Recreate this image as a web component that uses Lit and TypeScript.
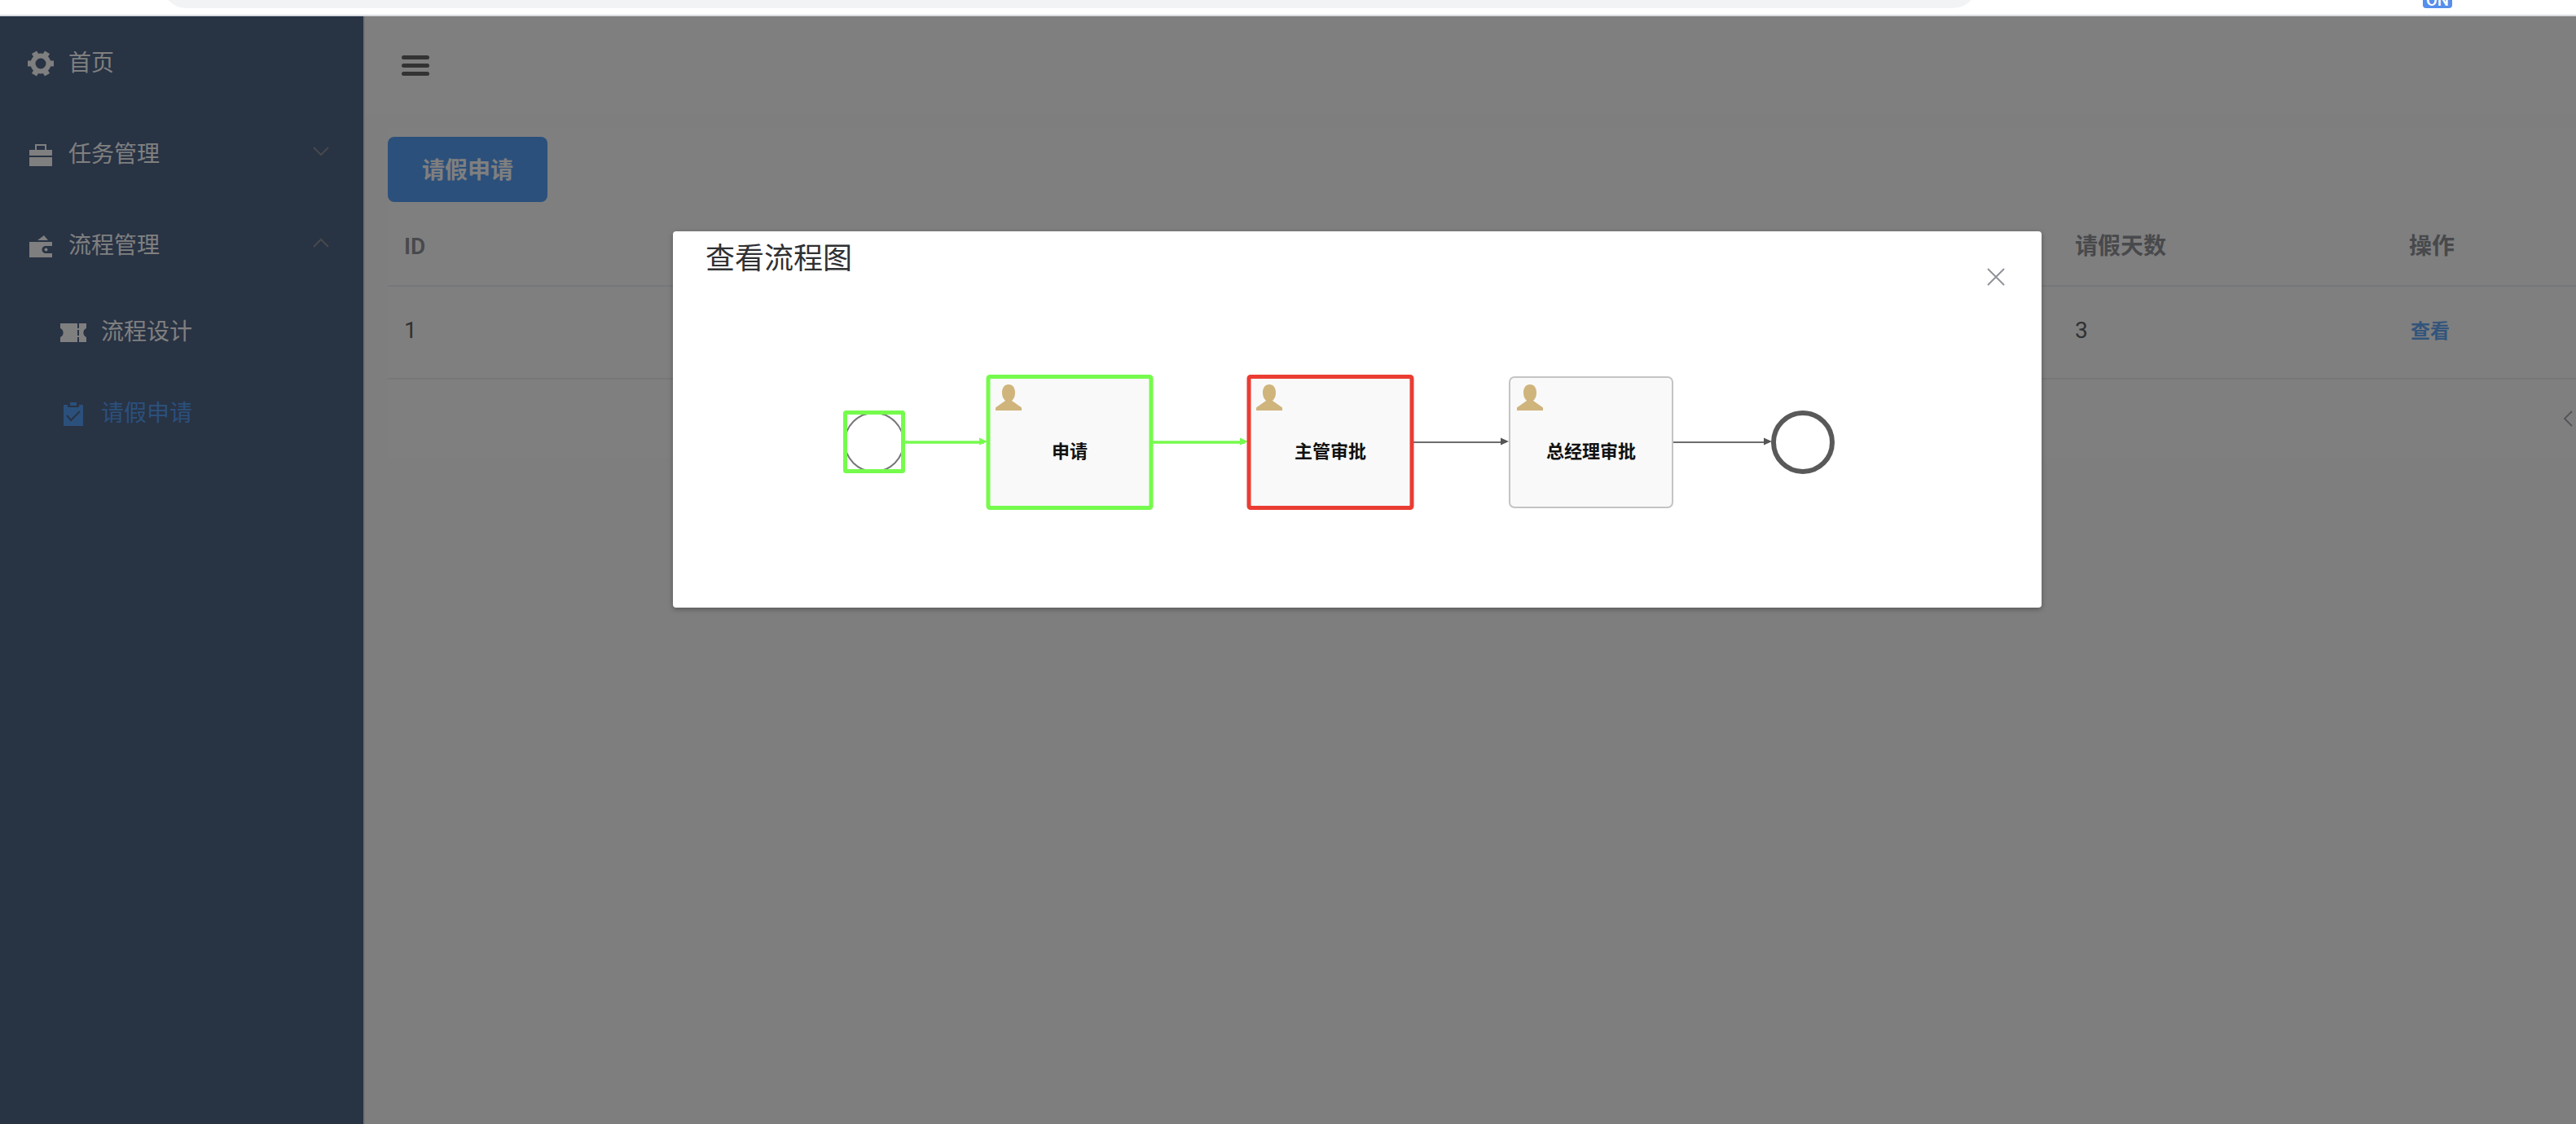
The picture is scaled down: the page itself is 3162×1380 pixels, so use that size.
import { LitElement, html, css, svg } from "lit";
import { customElement, state } from "lit/decorators.js";

const icons = {
  gear: svg`<circle cx="18" cy="18" r="9.500" fill="none" stroke="currentColor" stroke-width="6"/>
    ${[30, 90, 150, 210, 270, 330].map(
      (a) => svg`<path d="M14.500 2h7v5l1.500 2h-10l1.500-2z" fill="currentColor" transform="rotate(${a} 18 18)"/>`
    )}`,
  briefcase: svg`<path fill="currentColor" d="M11 5h14v7h7v7H4v-7h7zM13 7v5h10V7zM4 21h28v11H4z" fill-rule="evenodd"/>`,
  wallet: svg`<path fill="currentColor" d="M14 11l8-6 5 6zM4 13h28v5h-8a4 4 0 0 0 0 9h8v5H4z"/><circle cx="24.500" cy="22.500" r="2" fill="currentColor"/>`,
  ticket: svg`<path fill="currentColor" d="M2 7h21v6h2V7h9v6a6 6 0 0 0 0 11v6h-9v-6h-2v6H2v-6a6 6 0 0 0 0-11z"/><path d="M24 15v7" stroke="#506688" stroke-width="2"/>`,
  clipboard: svg`<path fill="currentColor" d="M14 4h8v4h-8zM6 7h5v3h14V7h5v26H6z"/><path d="M10 20l5 6 11-11" fill="none" stroke="#506688" stroke-width="2"/>`,
  down: svg`<path d="M9 9l9 9 9-9" fill="none" stroke="currentColor" stroke-width="2"/>`,
  up: svg`<path d="M9 19l9-9 9 9" fill="none" stroke="currentColor" stroke-width="2"/>`,
};

const icon = (name: keyof typeof icons) =>
  html`<svg class="icon" viewBox="0 0 36 36" aria-hidden="true">${icons[name]}</svg>`;

@customElement("process-diagram")
export class ProcessDiagram extends LitElement {
  static styles = css`
    :host { display: block; }
    .canvas { display: block; width: 100%; }
    .label {
      font: bold 22px "Liberation Sans", "Noto Sans CJK SC", sans-serif;
      text-anchor: middle;
      fill: #111;
    }
  `;

  private task(x: number, label: string, kind: "done" | "active" | "todo") {
    const marks = { done: "#75fb4c", active: "#ea3c32", todo: "" };
    return svg`
      <rect x=${x} y="99" width="200" height="160" rx="6" fill="#f9f9f9" stroke="#c4c4c4" stroke-width="2"/>
      ${marks[kind]
        ? svg`<rect x=${x} y="98.500" width="200" height="161" rx="2" fill="none" stroke=${marks[kind]} stroke-width="5"/>`
        : ""}
      <path transform="translate(${x + 9} 108)" fill="#cfb47c"
        d="M0 32V29Q0 28 2 27L12 20C9 17 8 14 8 10C8 4 11 0 16 0S24 4 24 10C24 14 23 17 20 20L30 27Q32 28 32 29V32Z"/>
      <text class="label" x=${x + 100} y="198">${label}</text>`;
  }

  private arrow(from: number, to: number, done: boolean) {
    const color = done ? "#75fb4c" : "#6c6c6c";
    return svg`
      <path d="M${from} 179H${to - 4}" stroke=${color} stroke-width=${done ? 3.5 : 2.2}/>
      <path d="M${to} 178l-10-4.500v9z" fill=${done ? color : "#555"}/>`;
  }

  render() {
    return html`
      <svg class="canvas" viewBox="0 0 1680 382" role="img" aria-label="流程图">
        <circle cx="247" cy="179" r="36" fill="#fff" stroke="#777" stroke-width="2"/>
        <rect x="211.500" y="142.500" width="71" height="72" rx="1" fill="none" stroke="#75fb4c" stroke-width="5"/>
        ${this.arrow(285, 386, true)}
        ${this.arrow(589, 706, true)}
        ${this.arrow(909, 1026, false)}
        ${this.arrow(1227, 1349, false)}
        ${this.task(387, "申请", "done")}
        ${this.task(707, "主管审批", "active")}
        ${this.task(1027, "总经理审批", "todo")}
        <circle cx="1387" cy="179" r="36" fill="#fff" stroke="#595959" stroke-width="6"/>
      </svg>`;
  }
}

@customElement("app-root")
export class AppRoot extends LitElement {
  @state() private open = true;

  static styles = css`
    :host {
      display: flex;
      flex-direction: column;
      min-height: 100vh;
      color: #606266;
      font: 28px/40px Roboto, "Noto Sans CJK SC", sans-serif;
    }
    * { box-sizing: border-box; }
    button { font: inherit; color: inherit; border: 0; background: none; padding: 0; cursor: pointer; }
    a { color: inherit; text-decoration: none; }
    .browser {
      display: flex;
      align-items: flex-end;
      height: 20px;
      padding: 0 152px 8px 200px;
      overflow: hidden;
      background: #fff;
      border-bottom: 2px solid #dadce0;
    }
    .address { flex: 1; height: 56px; border-radius: 28px; background: #f1f3f4; }
    .badge {
      width: 36px;
      margin-left: 548px;
      border-radius: 4px;
      background: #568eec;
      color: #fff;
      font-size: 20px;
      font-weight: 500;
      line-height: 20px;
      text-align: center;
    }
    .page { position: relative; display: flex; flex: 1; }
    .sidebar { width: 448px; background: #506688; border-right: 2px solid #e6e6e6; color: #fff; }
    .menu { list-style: none; margin: 0; padding: 0; }
    .item { display: flex; align-items: center; gap: 16px; width: 100%; height: 112px; padding: 4px 34px 0 32px; text-align: left; }
    .sub { height: 100px; padding-left: 72px; }
    .current { color: #56a0f6; }
    .label { flex: 1; }
    .icon { width: 36px; height: 36px; }
    .fold { display: flex; color: #909399; }
    .main { flex: 1; min-width: 0; background: #fcfcfc; }
    .header { display: flex; align-items: center; height: 120px; padding-left: 44px; background: #fff; }
    .toggle { display: grid; gap: 5px; width: 36px; padding: 0 1px; }
    .bar { height: 5px; border-radius: 3px; background: #666; }
    .card { margin: 16px 0 0 28px; padding-top: 12px; background: #fff; }
    .primary {
      display: block;
      height: 80px;
      padding: 4px 42px 0;
      border-radius: 8px;
      background: #56a0f6;
      color: #fff;
      font-weight: 600;
    }
    .table { width: 100%; table-layout: fixed; border-collapse: separate; border-spacing: 0; }
    .table th, .table td { padding: 0 20px; border-bottom: 2px solid #ebeef5; text-align: left; }
    .table th { height: 104px; padding-top: 8px; color: #909399; font-weight: 600; }
    .table td { height: 114px; padding-bottom: 4px; color: #606266; }
    .c-id, .c-days { width: 410px; }
    .c-op { width: 225px; }
    .link { color: #66aaf8; font-size: 24px; font-weight: 600; padding: 0 2px; }
    .pager { display: flex; justify-content: flex-end; align-items: center; height: 96px; padding: 0 4px; color: #a8abb2; }
    .prev { display: flex; }
    .arrow { width: 12px; height: 20px; }
    .overlay {
      position: absolute;
      inset: 0;
      display: grid;
      grid-template-columns: 826fr 1680fr 656fr;
      align-items: start;
      padding-top: 264px;
      background: rgba(0, 0, 0, 0.5);
    }
    .dialog {
      grid-column: 2;
      background: #fff;
      border-radius: 4px;
      box-shadow: 0 2px 6px rgba(0, 0, 0, 0.3);
    }
    .top { display: flex; justify-content: space-between; height: 80px; padding: 10px 40px 0; }
    .title { margin: 0; color: #303133; font-size: 36px; font-weight: 400; line-height: 48px; }
    .close { display: flex; align-self: flex-start; padding: 30px 0 0; margin: 0 4px; color: #909399; }
    .cross { width: 24px; height: 24px; margin-top: 4px; }
  `;

  render() {
    return html`
      <div class="browser"><div class="address"></div><div class="badge">ON</div></div>
      <div class="page">
        <nav class="sidebar">
          <ul class="menu">
            <li><a class="item" href="#home">${icon("gear")}<span class="label">首页</span></a></li>
            <li>
              <button class="item">${icon("briefcase")}<span class="label">任务管理</span><span class="fold">${icon("down")}</span></button>
            </li>
            <li>
              <button class="item">${icon("wallet")}<span class="label">流程管理</span><span class="fold">${icon("up")}</span></button>
              <ul class="menu">
                <li><a class="item sub" href="#design">${icon("ticket")}<span class="label">流程设计</span></a></li>
                <li><a class="item sub current" href="#leave">${icon("clipboard")}<span class="label">请假申请</span></a></li>
              </ul>
            </li>
          </ul>
        </nav>
        <main class="main">
          <header class="header">
            <button class="toggle" aria-label="菜单">
              <span class="bar"></span><span class="bar"></span><span class="bar"></span>
            </button>
          </header>
          <section class="card">
            <button class="primary">请假申请</button>
            <table class="table">
              <colgroup><col class="c-id" /><col /><col class="c-days" /><col class="c-op" /></colgroup>
              <thead>
                <tr><th>ID</th><th></th><th>请假天数</th><th>操作</th></tr>
              </thead>
              <tbody>
                <tr>
                  <td>1</td><td></td><td>3</td>
                  <td><button class="link" @click=${() => (this.open = true)}>查看</button></td>
                </tr>
              </tbody>
            </table>
            <div class="pager">
              <button class="prev" aria-label="上一页">
                <svg class="arrow" viewBox="0 0 12 20"><path d="M11 1L2 10l9 9" fill="none" stroke="currentColor" stroke-width="2"/></svg>
              </button>
            </div>
          </section>
        </main>
        ${this.open
          ? html`<div class="overlay">
              <section class="dialog" role="dialog" aria-labelledby="title">
                <header class="top">
                  <h2 class="title" id="title">查看流程图</h2>
                  <button class="close" aria-label="关闭" @click=${() => (this.open = false)}>
                    <svg class="cross" viewBox="0 0 24 24"><path d="M2 2l20 20M22 2L2 22" fill="none" stroke="currentColor" stroke-width="2"/></svg>
                  </button>
                </header>
                <process-diagram></process-diagram>
              </section>
            </div>`
          : ""}
      </div>
    `;
  }
}
